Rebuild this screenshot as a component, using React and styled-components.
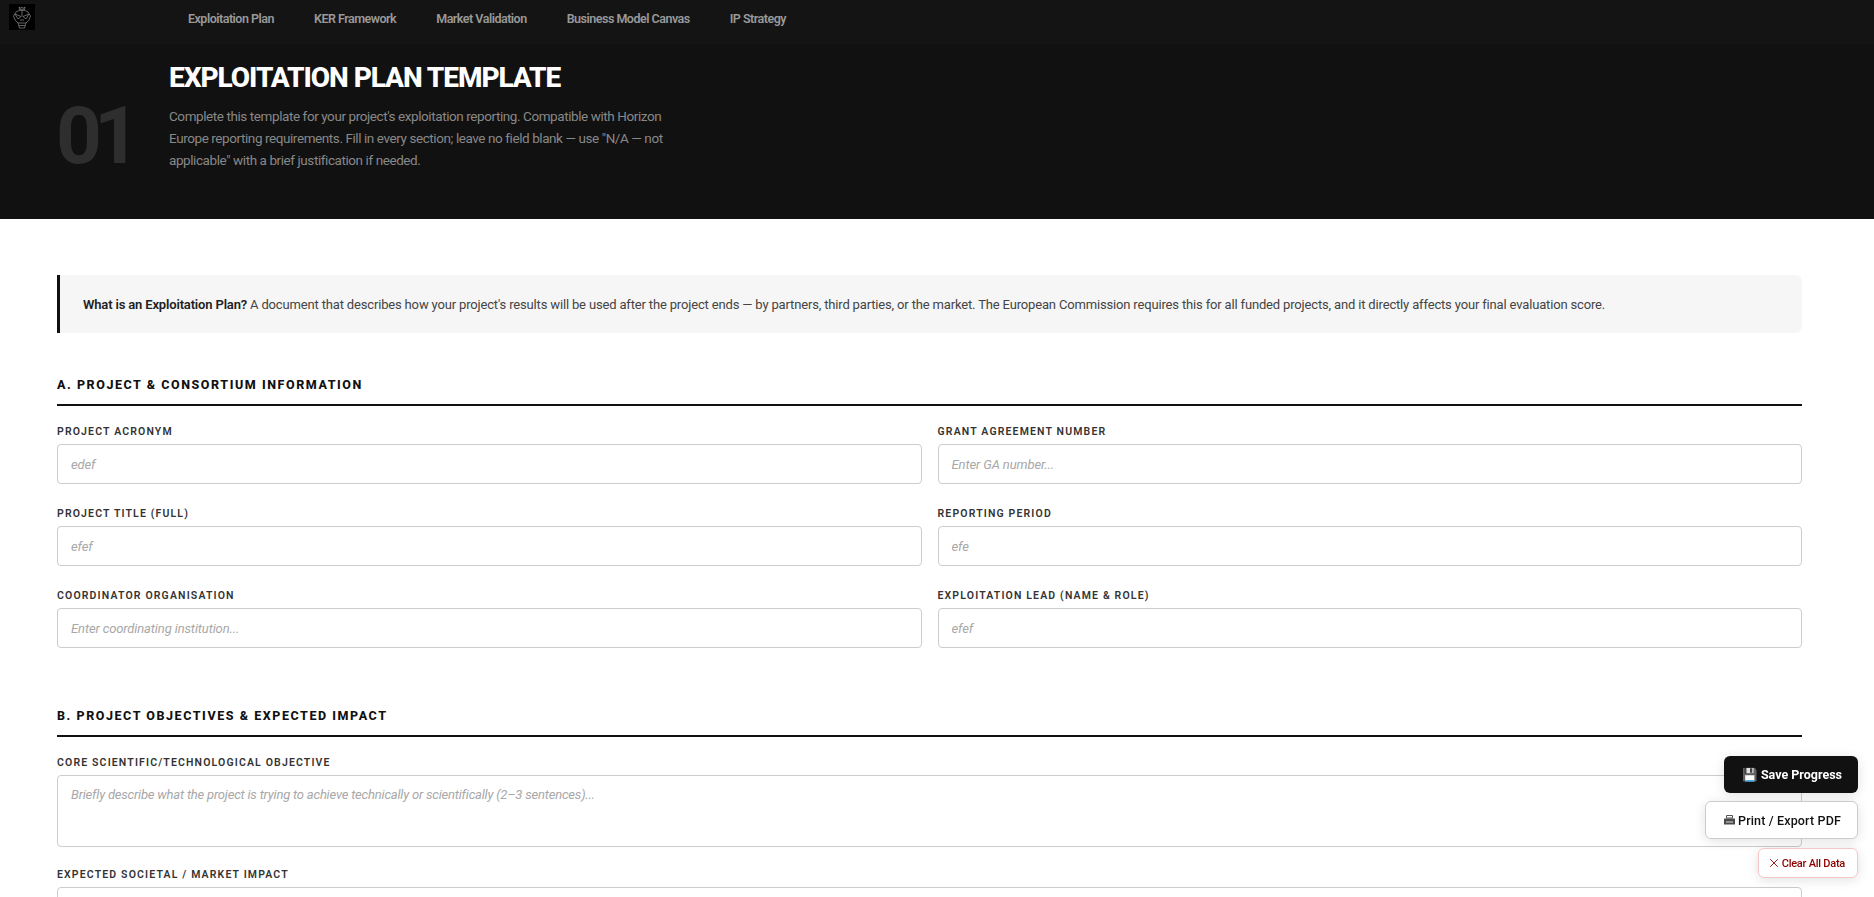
import React from "react";
import styled, { createGlobalStyle } from "styled-components";
import { X } from "lucide-react";

const fontStack = `"Roboto", "Liberation Sans", sans-serif`;

const GlobalStyle = createGlobalStyle`
  * {
    box-sizing: border-box;
  }
  html, body {
    margin: 0;
    padding: 0;
    height: 100%;
    overflow: hidden;
    background: #fff;
    font-family: ${fontStack};
  }
`;

const Nav = styled.nav`
  height: 44px;
  background: #141414;
  display: flex;
  align-items: flex-start;
  padding: 4px 0 0 9px;
`;

const LogoBox = styled.div`
  width: 26px;
  height: 26px;
  background: #000;
  display: flex;
  align-items: center;
  justify-content: center;
`;

const NavLinks = styled.div`
  display: flex;
  gap: 40px;
  margin-left: 153px;
  padding-top: 7px;
`;

const NavLink = styled.a`
  font-size: 12.5px;
  font-weight: 600;
  letter-spacing: -0.5px;
  line-height: 15px;
  color: #999;
`;

const Hero = styled.header`
  height: 175px;
  background: #111;
  display: flex;
  padding: 17px 0 0 56px;
`;

const HeroNumber = styled.div`
  width: 113px;
  padding-top: 35px;
  font-size: 80px;
  font-weight: 700;
  line-height: 80px;
  letter-spacing: -8px;
  color: #2e2e2e;
`;

const HeroBody = styled.div`
  width: 506px;
`;

const HeroTitle = styled.h1`
  margin: 0 0 10px;
  font-size: 28px;
  line-height: 34px;
  font-weight: 800;
  letter-spacing: -1.05px;
  color: #fff;
  white-space: nowrap;
`;

const HeroText = styled.p`
  margin: 0;
  font-size: 13.5px;
  line-height: 22px;
  letter-spacing: -0.42px;
  color: #888;
`;

const Main = styled.main`
  padding: 56px 72px 0 57px;
`;

const Callout = styled.div`
  height: 58px;
  display: flex;
  align-items: center;
  gap: 3px;
  padding-left: 23px;
  background: #f6f6f6;
  border-left: 3px solid #111;
  border-radius: 0 6px 6px 0;
  font-size: 13px;
  letter-spacing: -0.16px;
  color: #444;
  white-space: nowrap;

  strong {
    font-weight: 600;
    color: #222;
  }
`;

const Section = styled.section`
  margin-top: ${(p) => p.$top}px;
`;

const SectionTitle = styled.h2`
  margin: 0 0 19px;
  padding-bottom: 12px;
  border-bottom: 2px solid #111;
  font-size: 12.5px;
  line-height: 15px;
  font-weight: 800;
  letter-spacing: 1.55px;
  text-transform: uppercase;
  color: #111;
`;

const FieldGrid = styled.div`
  display: grid;
  grid-template-columns: 1fr 1fr;
  gap: 23px 16px;
`;

const Field = styled.div`
  display: flex;
  flex-direction: column;
  margin-bottom: ${(p) => p.$gap || 0}px;
`;

const Label = styled.label`
  margin-bottom: 6px;
  font-size: 10.5px;
  line-height: 13px;
  font-weight: 600;
  letter-spacing: 1.15px;
  text-transform: uppercase;
  color: #333;
`;

const Input = styled.input`
  height: 40px;
  padding: 0 13px;
  border: 1px solid #ccc;
  border-radius: 4px;
  background: #fff;
  font-family: ${fontStack};
  font-size: 13px;
  font-style: italic;
  letter-spacing: -0.12px;
  color: #a8a8a8;

  &::placeholder {
    color: #a8a8a8;
  }
`;

const TextArea = styled.textarea`
  height: 72px;
  padding: 11px 13px;
  border: 1px solid #ccc;
  border-radius: 4px;
  background: #fff;
  resize: none;
  font-family: ${fontStack};
  font-size: 13px;
  font-style: italic;
  letter-spacing: -0.2px;
  color: #a8a8a8;

  &::placeholder {
    color: #a8a8a8;
  }
`;

const Actions = styled.div`
  position: fixed;
  right: 16px;
  bottom: 19px;
  display: flex;
  flex-direction: column;
  align-items: flex-end;
  gap: 8px;
`;

const ActionButton = styled.button`
  height: ${(p) => p.$height}px;
  margin-top: ${(p) => (p.$danger ? 1 : 0)}px;
  padding: ${(p) => (p.$danger ? "0 12px 0 8px" : "0 16px 0 18px")};
  display: flex;
  align-items: center;
  gap: ${(p) => (p.$danger ? 1 : 3)}px;
  border-radius: 6px;
  font-family: ${fontStack};
  font-size: ${(p) => (p.$danger ? 11 : 12.5)}px;
  font-weight: ${(p) => (p.$primary ? 700 : 500)};
  letter-spacing: ${(p) => (p.$danger ? -0.25 : p.$primary ? 0 : 0.15)}px;
  background: ${(p) => (p.$primary ? "#111" : "#fff")};
  color: ${(p) => (p.$primary ? "#fff" : p.$danger ? "#8b0000" : "#111")};
  border: ${(p) =>
    p.$primary ? "none" : p.$danger ? "1px solid #f5c6c6" : "1px solid #ccc"};
  box-shadow: 0 2px 12px rgba(0, 0, 0, 0.12);
  white-space: nowrap;
`;

const Logo = () => (
  <svg width="20" height="24" viewBox="0 0 20 24" fill="none" stroke="#8c8c8c" strokeWidth="0.7">
    <path d="M7.5 5 L7 2 L9 3.5 L10 2 L11 3.5 L13 2 L12.5 5 Z" />
    <path d="M4 7 L8 5 H12 L16 7 L18.5 11 L17 15 L14 18 L12.5 23 H7.5 L6 18 L3 15 L1.5 11 Z" />
    <path d="M3 9 L9 11.5 L6 14 Z M17 9 L11 11.5 L14 14 Z M6 18 H14 M7 20.5 H13 M10 5 V12 M8 15 H12" />
  </svg>
);

const PrinterIcon = () => (
  <svg width="11" height="10" viewBox="0 0 11 10">
    <path d="M2.5 0.5 H8.5 V3 H2.5 Z" fill="none" stroke="#555" strokeWidth="1" />
    <path d="M0 3.5 H11 V9.5 H0 Z" fill="#4a4a4a" />
    <path d="M2 6.5 H9 V7.5 H2 Z" fill="#ddd" />
  </svg>
);

const navItems = [
  "Exploitation Plan",
  "KER Framework",
  "Market Validation",
  "Business Model Canvas",
  "IP Strategy",
];

const projectFields = [
  { label: "Project Acronym", placeholder: "edef" },
  { label: "Grant Agreement Number", placeholder: "Enter GA number..." },
  { label: "Project Title (Full)", placeholder: "efef" },
  { label: "Reporting Period", placeholder: "efe" },
  { label: "Coordinator Organisation", placeholder: "Enter coordinating institution..." },
  { label: "Exploitation Lead (Name & Role)", placeholder: "efef" },
];

export default function App() {
  return (
    <>
      <GlobalStyle />
      <Nav>
        <LogoBox>
          <Logo />
        </LogoBox>
        <NavLinks>
          {navItems.map((item) => (
            <NavLink key={item}>{item}</NavLink>
          ))}
        </NavLinks>
      </Nav>
      <Hero>
        <HeroNumber>01</HeroNumber>
        <HeroBody>
          <HeroTitle>EXPLOITATION PLAN TEMPLATE</HeroTitle>
          <HeroText>
            Complete this template for your project's exploitation reporting. Compatible with Horizon
            Europe reporting requirements. Fill in every section; leave no field blank — use "N/A — not
            applicable" with a brief justification if needed.
          </HeroText>
        </HeroBody>
      </Hero>
      <Main>
        <Callout>
          <strong>What is an Exploitation Plan?</strong>
          <span>
            A document that describes how your project's results will be used after the project ends
            — by partners, third parties, or the market. The European Commission requires this for all
            funded projects, and it directly affects your final evaluation score.
          </span>
        </Callout>
        <Section $top={44}>
          <SectionTitle>A. Project &amp; Consortium Information</SectionTitle>
          <FieldGrid>
            {projectFields.map((field) => (
              <Field key={field.label}>
                <Label>{field.label}</Label>
                <Input placeholder={field.placeholder} />
              </Field>
            ))}
          </FieldGrid>
        </Section>
        <Section $top={60}>
          <SectionTitle>B. Project Objectives &amp; Expected Impact</SectionTitle>
          <Field $gap={21}>
            <Label>Core Scientific/Technological Objective</Label>
            <TextArea placeholder="Briefly describe what the project is trying to achieve technically or scientifically (2–3 sentences)..." />
          </Field>
          <Field>
            <Label>Expected Societal / Market Impact</Label>
            <TextArea />
          </Field>
        </Section>
      </Main>
      <Actions>
        <ActionButton $primary $height={37}>💾 Save Progress</ActionButton>
        <ActionButton $height={38}><PrinterIcon />Print / Export PDF</ActionButton>
        <ActionButton $danger $height={30}><X size={14} strokeWidth={1.5} />Clear All Data</ActionButton>
      </Actions>
    </>
  );
}
